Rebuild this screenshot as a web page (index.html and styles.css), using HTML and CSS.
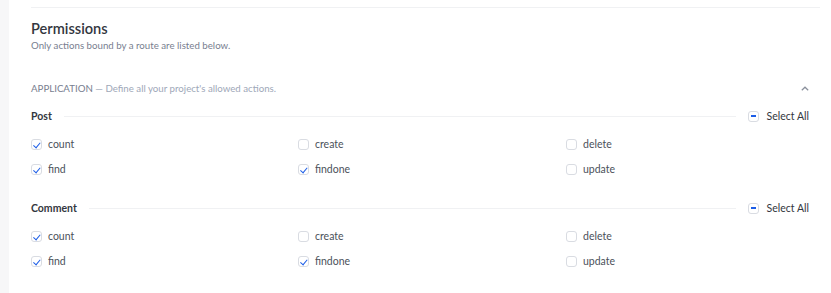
FILE: index.html
```html
<!DOCTYPE html>
<html lang="en">
<head>
    <meta charset="UTF-8">
    <meta name="viewport" content="width=device-width, initial-scale=1.0">
    <title>Permissions</title>
    <link rel="stylesheet" href="styles.css">
</head>
<body>
<div class="card">
    <div class="top-rule"></div>
    <div class="perm-head">
        <h2>Permissions</h2>
        <p>Only actions bound by a route are listed below.</p>
    </div>

    <div class="app-bar">
        <div class="app-text"><span class="app-name">Application</span> &mdash; Define all your project's allowed actions.</div>
        <svg class="chevron" width="8" height="5" viewBox="0 0 8 5"><polyline points="0.8,4.3 4,1.2 7.2,4.3" fill="none" stroke="#8a909c" stroke-width="1.2"/></svg>
    </div>

    <div class="controller">
        <div class="ctrl-head">
            <span class="ctrl-name">Post</span>
            <span class="ctrl-line"></span>
            <label class="select-all"><span class="box partial"></span>Select All</label>
        </div>
        <div class="actions">
            <label class="action"><span class="box checked"></span>count</label>
            <label class="action"><span class="box"></span>create</label>
            <label class="action"><span class="box"></span>delete</label>
            <label class="action"><span class="box checked"></span>find</label>
            <label class="action"><span class="box checked"></span>findone</label>
            <label class="action"><span class="box"></span>update</label>
        </div>
    </div>

    <div class="controller">
        <div class="ctrl-head">
            <span class="ctrl-name">Comment</span>
            <span class="ctrl-line"></span>
            <label class="select-all"><span class="box partial"></span>Select All</label>
        </div>
        <div class="actions">
            <label class="action"><span class="box checked"></span>count</label>
            <label class="action"><span class="box"></span>create</label>
            <label class="action"><span class="box"></span>delete</label>
            <label class="action"><span class="box checked"></span>find</label>
            <label class="action"><span class="box checked"></span>findone</label>
            <label class="action"><span class="box"></span>update</label>
        </div>
    </div>
</div>
</body>
</html>
```

FILE: styles.css
```css
body {
    margin: 0;
    font-family: Lato, "Open Sans", sans-serif;
    background-color: #f7f7f8;
    color: #333740;
}
.card {
    margin-left: 9px;
    min-height: 293px;
    background-color: #fff;
    padding: 0 22px;
    box-sizing: border-box;
}
.top-rule {
    height: 1px;
    background-color: #f0f1f3;
    margin: 0 -11px 0 0;
    position: relative;
    top: 7px;
}
.perm-head {
    padding-top: 18px;
}
.perm-head h2 {
    margin: 0;
    font-size: 14.6px;
    line-height: 20px;
    font-weight: 600;
    color: #333740;
}
.perm-head p {
    margin: 0;
    font-size: 9.7px;
    line-height: 12px;
    color: #787e8f;
}
.app-bar {
    display: flex;
    align-items: center;
    justify-content: space-between;
    margin-top: 28px;
    height: 18px;
    font-size: 9.7px;
    color: #9ea7b8;
}
.app-name {
    text-transform: uppercase;
    color: #787e8f;
}
.chevron {
    margin-right: 0;
}
.controller {
    margin-top: 11px;
}
.controller + .controller {
    margin-top: 21px;
}
.ctrl-head {
    display: flex;
    align-items: center;
    height: 16px;
    font-size: 10.5px;
}
.ctrl-name {
    font-weight: 700;
    color: #333740;
}
.ctrl-line {
    flex: 1;
    height: 1px;
    background-color: #f0f1f3;
    margin: 0 12px;
}
.select-all {
    display: flex;
    align-items: center;
    gap: 8px;
    color: #333740;
}
.actions {
    display: grid;
    grid-template-columns: 267px 268px 1fr;
    row-gap: 5px;
    margin-top: 10px;
}
.action {
    display: flex;
    align-items: center;
    gap: 6px;
    height: 20px;
    font-size: 10.5px;
    color: #4b515a;
}
.box {
    position: relative;
    width: 11px;
    height: 11px;
    border: 1px solid #d9dce2;
    border-radius: 3px;
    box-sizing: border-box;
    flex-shrink: 0;
}
.box.checked::after {
    content: "";
    position: absolute;
    left: 2.5px;
    top: 1px;
    width: 3px;
    height: 5.5px;
    border: solid #1c5de7;
    border-width: 0 1.5px 1.5px 0;
    transform: rotate(40deg);
}
.box.partial::after {
    content: "";
    position: absolute;
    left: 2px;
    top: 3.5px;
    width: 5px;
    height: 2px;
    background-color: #1c5de7;
}
```
